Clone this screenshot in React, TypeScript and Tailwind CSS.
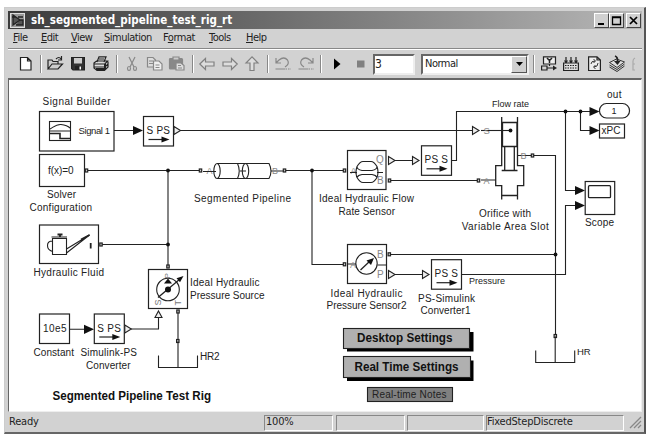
import React from "react";

const ui = "font-['DejaVu_Sans_Condensed','DejaVu_Sans',sans-serif]";

function Label({ x, y, w, s = 10, b, c = "#222", children }: { x: number; y: number; w: number; s?: number; b?: boolean; c?: string; children: string }) {
  return (
    <text x={x} y={y} textLength={w} lengthAdjust={b ? "spacingAndGlyphs" : "spacing"} fontSize={s} fontWeight={b ? 700 : 400} fill={c} stroke="none">
      {children}
    </text>
  );
}
const Box = ({ x, y, w, h }: { x: number; y: number; w: number; h: number }) => <rect x={x} y={y} width={w} height={h} fill="#fff" strokeWidth="1.2" />;
const Port = ({ x, y }: { x: number; y: number }) => <rect x={x - 1.2} y={y - 1.5} width="2.4" height="3" fill="#ccc" strokeWidth="1.2" />;
const Dot = ({ x, y }: { x: number; y: number }) => <circle cx={x} cy={y} r="1.9" fill="#111" stroke="none" />;
const Tri = ({ x, y }: { x: number; y: number }) => <path d={`M${x} ${y - 4}L${x + 6.5} ${y}L${x} ${y + 4}Z`} fill="#eee" />;
const Arrow = ({ x, y }: { x: number; y: number }) => <path d={`M${x - 10} ${y - 4.6}L${x} ${y}L${x - 10} ${y + 4.6}Z`} fill="#111" stroke="none" />;

function Converter({ x, y, t }: { x: number; y: number; t: string }) {
  return (
    <g>
      <Box x={x} y={y} w={30} h={29.5} />
      <Label x={x + 3} y={y + 17.5} w={23.5}>{t}</Label>
      <path d={`M${x + 5} ${y + 23}h16`} strokeWidth="1.2" />
      <path d={`M${x + 18} ${y + 20}l8 3l-8 3z`} fill="#111" stroke="none" />
    </g>
  );
}
const Tank = ({ x, y }: { x: number; y: number }) => <path d={`M${x} ${y - 12}v12h39v-12M${x + 19.5} ${y}v-26`} />;

function Diagram() {
  return (
    <svg className="block h-[331px] w-[632px] font-['Liberation_Sans',Arial,sans-serif]" viewBox="9 80 632 331" fill="none" stroke="#222" strokeWidth="1.1">
      {/* signal lines */}
      <path d="M114 130.500H136M180 130.500H472M88 170.5H200M168 170.5V265M102 244.5H168M286 170.5H343M312 170.5V264.5H343M395 160.5H413M391 180.5H477M452 160.5H456.5V111.5H592M565.5 111.5V190.5H577M580.5 111.5V130.500H592M577 205.5H565.5V274.5H462M391 254.5H555.5M534 155.5H555.5V336M395 274.5H423M70 329.3H86M131 329H158.5V317M178 312V341" />
      <Dot x={168} y={170.5} /><Dot x={168} y={244.5} /><Dot x={312} y={170.5} /><Dot x={565.5} y={111.5} /><Dot x={580.5} y={111.5} /><Dot x={555.5} y={254.5} />

      {/* signal builder */}
      <Label x={42.5} y={105} w={68}>Signal Builder</Label>
      <Box x={39.5} y={111.5} w={74.5} h={39.5} />
      <rect x="49.5" y="121.5" width="21" height="19" />
      <path d="M50 129c5-3 7-5 11-4.500s7 1.500 9 3.500M50 131H70" />
      <path d="M50 133.500h10v5h10" strokeWidth="1.600" />
      <Label x={78.500} y={133.500} w={31.500} s={9.5}>Signal 1</Label>
      <Arrow x={143} y={130.5} />
      <Converter x={143.500} y={116.500} t="S PS" />
      <Tri x={174} y={130.5} />

      {/* solver */}
      <Box x={39.500} y={154.500} w={45} h={32} />
      <Label x={48} y={174} w={25.500}>f(x)=0</Label>
      <Port x={86.500} y={170.500} />
      <Label x={47} y={198} w={29}>Solver</Label>
      <Label x={29.500} y={210.500} w={62.500}>Configuration</Label>

      {/* pipeline */}
      <Port x={200.500} y={170.500} />
      <Label x={206.500} y={173.500} w={6} s={9} c="#888">A</Label>
      <path d="M203 171.500H216M271 171H283" />
      <path d="M217 163.500H237.500q3.500 7.500 0 15H217M245.500 163.500H269q4 7.500 0 15H245.500M240 171h6" />
      <ellipse cx="217" cy="171" rx="3.200" ry="7.500" />
      <ellipse cx="245.500" cy="171" rx="3.200" ry="7.500" />
      <path d="M236 163.500h10M236 178.500h10" />
      <Label x={272} y={173.500} w={6} s={9} c="#888">B</Label>
      <Port x={284.500} y={170.500} />
      <Label x={194} y={202} w={97}>Segmented Pipeline</Label>

      {/* flow sensor */}
      <Box x={347.500} y={150.500} w={38.500} h={39} />
      <Port x={344.500} y={170.500} />
      <Label x={350.500} y={173.500} w={6.500} s={9} c="#888">A</Label>
      <path d="M350 172.500H357M377 172.500H383M357 166.500q3-5 6-5h8q3 0 6 5M357 166.500q0 3 5 4h10q5-1 5-4M357 177.500q3 5 6 5h8q3 0 6-5M357 177.500q1-2.500 5-3h10q4 .5 5 3M357 166.500q-2 5.500 0 11M377 166.500q2 5.500 0 11" />
      <Label x={376} y={163} w={7.500} s={10} c="#888">Q</Label>
      <Label x={377} y={183.500} w={6} s={10} c="#888">B</Label>
      <Tri x={388.500} y={160.500} />
      <Port x={389.500} y={180.500} />
      <Tri x={412.500} y={160.500} />
      <Converter x={421.500} y={145.800} t="PS S" />
      <Label x={319} y={202} w={95}>Ideal Hydraulic Flow</Label>
      <Label x={338.500} y={215} w={56.500}>Rate Sensor</Label>

      {/* orifice */}
      <Label x={492} y={106.500} w={37} s={9}>Flow rate</Label>
      <Tri x={472.500} y={130.5} />
      <path d="M481 130.500H510" />
      <Label x={483.500} y={134} w={6} s={9.500} c="#888">S</Label>
      <Port x={478.500} y={180.500} />
      <path d="M481 180H496M517.500 155.500H531" />
      <Label x={483.500} y={183.500} w={6.500} s={9} c="#888">A</Label>
      <Label x={520.500} y={159} w={6.500} s={9} c="#888">B</Label>
      <Port x={532.500} y={155.500} />
      <path d="M501.700 117V165.700H495.700V185.700H501.700V199.500M517.500 117V165.700H523.700V185.700H517.500V199.500" strokeWidth="1.300" />
      <path d="M502.500 122.500h14.500v24h-14.500zM504.700 146.500V170.500M514.300 146.500V170.500M501.700 170.500H517.500M501.700 195.500H517.500" strokeWidth="1.300" />
      <Dot x={510.500} y={130.5} />
      <Label x={479} y={216.500} w={52}>Orifice with</Label>
      <Label x={461.700} y={229.500} w={87}>Variable Area Slot</Label>

      {/* outputs */}
      <Label x={607} y={97.500} w={14.500}>out</Label>
      <rect x="599.500" y="103.500" width="30" height="14.500" rx="7" fill="#fff" strokeWidth="1.200" />
      <Label x={611.500} y={114} w={4.500} s={9}>1</Label>
      <Arrow x={599.500} y={111.500} />
      <Arrow x={599.500} y={130.5} />
      <Box x={599.500} y={124} w={25} h={14} />
      <Label x={601.500} y={134} w={19}>xPC</Label>
      <Box x={585.200} y={181.500} w={29.500} h={33} />
      <rect x="588.500" y="185.700" width="22" height="12" rx="1" strokeWidth="1.300" />
      <Arrow x={585} y={190.500} />
      <Arrow x={585} y={205.500} />
      <Label x={585} y={226} w={29}>Scope</Label>

      {/* hydraulic fluid */}
      <Box x={39.500} y={225} w={59} h={38.500} />
      <Port x={101} y={244.500} />
      <path d="M52.500 238.500H66.500V254.500H52.500ZM51.500 237H67M52.500 241q-5 0-5 4.500t5 6M66.500 249L89.500 235L66.500 253" />
      <path d="M57.500 234.500h5M60 234v3M81 239.500L89.500 235M90.700 243v5.500" strokeWidth="1.800" />
      <Label x={33.500} y={276} w={70.500}>Hydraulic Fluid</Label>

      {/* pressure source */}
      <Box x={148.500} y={269.500} w={39} h={39} />
      <Port x={168} y={266.500} />
      <circle cx="168" cy="289.500" r="11.300" />
      <path d="M158 297.500L180 279" strokeWidth="1.300" />
      <path d="M183.500 276l-3.500 6.200l-3.500-4z" fill="#111" stroke="none" />
      <path d="M168 278.500l4 5h-8z" fill="#111" stroke="none" />
      <circle cx="168" cy="289.500" r="3" fill="#111" stroke="none" />
      <text transform="translate(169.500 278.500) rotate(-90)" fontSize="8" fill="#777" stroke="none">P</text>
      <text transform="translate(161 305.500) rotate(-90)" fontSize="9" fill="#777" stroke="none">S</text>
      <text transform="translate(181 305.500) rotate(-90)" fontSize="9" fill="#777" stroke="none">T</text>
      <path d="M158.500 311l3.500 6.500h-7z" fill="#eee" />
      <Port x={178} y={311.500} />
      <Label x={190} y={286} w={69.500}>Ideal Hydraulic</Label>
      <Label x={190} y={299} w={74.500}>Pressure Source</Label>
      <Port x={177.800} y={341} />
      <Tank x={158.500} y={367.500} />
      <Label x={200} y={359.500} w={19.500}>HR2</Label>

      {/* constant */}
      <Box x={39.500} y={314} w={30} h={29.500} />
      <Label x={43} y={332} w={23.500}>10e5</Label>
      <Arrow x={94} y={329.300} />
      <Converter x={94.300} y={314} t="S PS" />
      <Tri x={124.800} y={329} />
      <Label x={33.500} y={355.500} w={40.500}>Constant</Label>
      <Label x={80.500} y={355.500} w={56.500}>Simulink-PS</Label>
      <Label x={86} y={368.500} w={44.500}>Converter</Label>
      <Label x={52.500} y={399.500} w={158.500} s={12} b c="#111">Segmented Pipeline Test Rig</Label>

      {/* pressure sensor */}
      <Box x={347.500} y={244.500} w={39} h={39} />
      <Port x={344.500} y={264.300} />
      <path d="M347.500 264H356M377.500 265H386.500" />
      <Label x={350} y={267.500} w={6.500} s={9} c="#888">A</Label>
      <circle cx="366.500" cy="263.500" r="10.700" />
      <path d="M360.500 270L370 261" strokeWidth="1.300" />
      <path d="M374 258l-3 7l-4.500-4.500z" fill="#111" stroke="none" />
      <Label x={377} y={257.500} w={6} s={10} c="#888">B</Label>
      <Label x={377} y={277.500} w={6} s={10} c="#888">P</Label>
      <Port x={389.300} y={254.300} />
      <Tri x={388.500} y={274.500} />
      <Tri x={422.500} y={274.500} />
      <Converter x={431.500} y={259.700} t="PS S" />
      <Label x={469} y={284} w={36} s={9}>Pressure</Label>
      <Label x={330.500} y={296.500} w={72}>Ideal Hydraulic</Label>
      <Label x={326.500} y={309} w={80}>Pressure Sensor2</Label>
      <Label x={418} y={301.500} w={57}>PS-Simulink</Label>
      <Label x={420.500} y={314} w={50}>Converter1</Label>
      <Port x={555.300} y={336} />
      <Tank x={535.700} y={362.500} />
      <Label x={577} y={354.500} w={13.500} s={9.5}>HR</Label>

      {/* annotation buttons */}
      <rect x="347" y="332" width="126.500" height="19.500" fill="#000" stroke="none" />
      <rect x="343.500" y="328.500" width="126" height="20" fill="#b0b0b0" />
      <Label x={357} y={342} w={95.500} s={12} b c="#111">Desktop Settings</Label>
      <rect x="347" y="360.500" width="126.500" height="20.500" fill="#000" stroke="none" />
      <rect x="343.500" y="356.500" width="127" height="21" fill="#b0b0b0" />
      <Label x={354.500} y={370.500} w={104} s={12} b c="#111">Real Time Settings</Label>
      <rect x="367.500" y="387.500" width="85" height="14" fill="#808080" />
      <Label x={372} y={397.500} w={74.500} s={10}>Real-time Notes</Label>
    </svg>
  );
}

function Icon({ ml, w = 16, color = "#222", children }: { ml: string; w?: number; color?: string; children: React.ReactNode }) {
  return (
    <svg className={`h-4 shrink-0 overflow-visible ${ml}`} width={w} height="16" viewBox={`0 0 ${w} 16`} fill="none" stroke={color} strokeWidth="1.2">
      {children}
    </svg>
  );
}
const Sep = ({ ml }: { ml: string }) => <i className={`h-[18px] w-[2px] shrink-0 border-l border-l-[#888] bg-white ${ml}`} />;

function Toolbar() {
  return (
    <div className="flex h-[29px] shrink-0 items-center overflow-hidden border-t border-t-white">
      <Icon ml="ml-[12px]" w={12}><path d="M.5 1.500H7.500L11 5V14H.5ZM7.500 1.500V5H11" fill="#fff" /></Icon>
      <Sep ml="ml-[8px]" />
      <Icon ml="ml-[5px]"><path d="M1 13V4H5L6 5.500H11V8M1 13L5 8H15.500L11 13ZM9 3q3-3 5 0M14.500 0V4H11" fill="#ccc" /></Icon>
      <Icon ml="ml-[8px]" w={14}><path d="M.6 1.500H13.400V14H2L.6 12.500Z" fill="#333" /><path d="M3 2H11V7.500H3Z" fill="#ccc" stroke="none" /><path d="M4 10H10V14H4Z" fill="#222" stroke="none" /><path d="M8.500 10.500h1.500v3h-1.500z" fill="#fff" stroke="none" /></Icon>
      <Icon ml="ml-[8px]"><path d="M4 6L6 .8H13L11 6M1 7L3.500 5H14.500L12 8H1ZM1 8V12L4 14.500H11.500L15 11V5.500M1 11H12L15 8M6 3H11" fill="#ddd" /><path d="M3 13H12M12 8V13" strokeWidth="2" /></Icon>
      <Sep ml="ml-[7px]" />
      <Icon ml="ml-[9px]" w={10} color="#888"><path d="M2 1L7 11M8 1L3 11" /><ellipse cx="2" cy="12.500" rx="1.500" ry="2" /><ellipse cx="8" cy="12.500" rx="1.500" ry="2" /></Icon>
      <Icon ml="ml-[10px]" color="#888"><path d="M.5 1.500H6L8.500 4V11H.5Z" fill="#ddd" /><path d="M6.500 5H12L15 8V14H6.500ZM2 5h4M2 7.500h4M8.500 9h4M8.500 11.500h4" fill="#eee" /></Icon>
      <Icon ml="ml-[6px]" color="#888"><rect x=".5" y="2.500" width="13" height="10.500" rx="1" fill="#888" /><path d="M4 1h6v3H4z" fill="#ccc" /><path d="M7 7H12L15 9.500V14H7ZM9 9.500h3M9 12h4" fill="#ddd" /></Icon>
      <Sep ml="ml-[7px]" />
      <Icon ml="ml-[5px]" color="#808080"><path d="M.8 8L6.500 2.500V6H15V10H6.500V13.500Z" fill="#ddd" /></Icon>
      <Icon ml="ml-[7px]" color="#808080"><path d="M15.200 8L9.500 2.500V6H1V10H9.500V13.500Z" fill="#ddd" /></Icon>
      <Icon ml="ml-[7px]" w={14} color="#808080"><path d="M7 .8L1 7H5V14.500H9V7H13Z" fill="#ddd" /></Icon>
      <Sep ml="ml-[8px]" />
      <Icon ml="ml-[6px]" color="#888"><path d="M1 2V7H6M1 7L4 4Q9 0 12.500 4Q15 8 10 11M.5 13H10" /><path d="M10.500 13H16" strokeDasharray="1.500 1" /></Icon>
      <Icon ml="ml-[7px]" color="#888"><path d="M15 2V7H10M15 7L12 4Q7 0 3.500 4Q1 8 6 11M.5 13H10" /><path d="M10.500 13H16" strokeDasharray="1.500 1" /></Icon>
      <Sep ml="ml-[6px]" />
      <Icon ml="ml-[12px]" w={7}><path d="M0 2.500L6.500 8L0 13.500Z" fill="#000" stroke="none" /></Icon>
      <Icon ml="ml-[16px]" w={8}><path d="M0 4.500H7.500V11.500H0Z" fill="#808080" stroke="none" /></Icon>
      <div className="ml-[8px] flex h-[21px] w-[42px] shrink-0 items-center border-2 border-b-[#eee] border-l-[#666] border-r-[#eee] border-t-[#666] bg-white text-[12px]">3</div>
      <div className="ml-[6px] flex h-[21px] w-[108px] shrink-0 items-center justify-between border-2 border-b-[#eee] border-l-[#666] border-r-[#eee] border-t-[#666] bg-white pl-[2px] text-[11px]">
        <span className="tracking-[-0.5px]">Normal</span>
        <span className="flex h-[17px] w-[16px] items-center justify-center border border-b-[#555] border-l-white border-r-[#555] border-t-white bg-[#d0d0d0]">
          <svg width="7" height="4" viewBox="0 0 7 4"><path d="M0 0H7L3.500 4Z" /></svg>
        </span>
      </div>
      <Sep ml="ml-[4px]" />
      <Icon ml="ml-[6px]"><path d="M2.500.8H14.500V8H2.500Z" fill="#eee" /><path d="M6 2L8.500 4.500V7M11 2L8.500 4.500" strokeWidth="1.500" /><path d="M.6 10H6V14H.6ZM6 12H13M8.500 8V10" /><path d="M12 9.500L16 12L12 14.500Z" fill="#222" stroke="none" /></Icon>
      <Icon ml="ml-[6px]"><path d="M.6 7H15.400V14.500H.6ZM3 1V6M8 1V6M13 1V6M1.500 4.500L3 6.500L4.500 4.500M6.500 4.500L8 6.500L9.500 4.500M11.500 4.500L13 6.500L14.500 4.500" fill="#ddd" /><path d="M2 9.500H14M2 12H14" strokeDasharray="1.500 1" /></Icon>
      <Icon ml="ml-[9px]" w={13}><path d="M.6 .8H9L12.400 4V14.500H.6ZM9 .8V4H12" fill="#eee" /><path d="M3 8Q3 5 7 5M5.500 3L7.500 5L5.500 7M10 7Q10 11 6 11M7.500 9L5.500 11L7.500 13" strokeWidth=".9" /></Icon>
      <Icon ml="ml-[8px]"><path d="M.5 11L8 15.500L15.500 10M.5 9L8 13.500L15.500 8" strokeWidth=".9" /><path d="M.5 6.500L7.500 3L15.500 6L8 11.500Z" fill="#ddd" strokeWidth=".9" /><path d="M6 0Q9 1 8.500 6" strokeWidth="1.800" /><path d="M5 5H11.500L8.500 9Z" fill="#222" stroke="none" /></Icon>
      <Icon ml="ml-[7px]" w={3} color="#aaa"><path d="M3 2Q1 3 1 5V14H3M1 8H3" /></Icon>
    </div>
  );
}

const menus = [
  ["File", "w-[28px]"], ["Edit", "w-[30px]"], ["View", "w-[33px]"], ["Simulation", "w-[59px]"], ["Format", "w-[46px]"], ["Tools", "w-[37px]"], ["Help", "w-[30px]"],
];

function Caption({ children }: { children: React.ReactNode }) {
  return (
    <span className="flex h-[15px] w-[15px] items-center justify-center border border-b-[#444] border-l-white border-r-[#444] border-t-white bg-[#d0d0d0]">
      <svg width="11" height="11" viewBox="0 0 11 11" fill="none" stroke="#000">{children}</svg>
    </span>
  );
}
const cell = "flex h-[16px] items-center border border-b-white border-l-[#888] border-r-white border-t-[#888]";

export default function App() {
  return (
    <div className={`h-[445px] w-[655px] overflow-hidden bg-white pl-[4px] pt-[7px] text-[#222] ${ui}`}>
      <div className="flex h-[427px] w-[642px] flex-col border-b-2 border-l border-r-2 border-t border-b-[#666] border-l-[#ccc] border-r-[#555] border-t-[#ccc] bg-[#d2d2d2] pl-[3px] pr-[2px] pt-[3px]">
        <div className="flex h-[18px] shrink-0 items-center bg-linear-to-r from-[#3c3c3c] to-[#b8b8b8] pl-[2px] pr-[1px]">
          <svg width="15" height="15" viewBox="0 0 15 15" fill="none" stroke="#222">
            <rect x=".5" y=".5" width="14" height="14" fill="#999" stroke="#ddd" />
            <path d="M3 2L10 7L3 12ZM2 4H6M10 7H13V12H6M8 4h5" fill="#555" strokeWidth="1.300" />
          </svg>
          <span className="ml-[6px] flex-1 whitespace-nowrap text-[11.500px] font-bold leading-[18px] tracking-[0.02px] text-white">sh_segmented_pipeline_test_rig_rt</span>
          <Caption><path d="M2 9H8" strokeWidth="2" /></Caption>
          <Caption><path d="M1.500 2H9.500V9.500H1.500ZM1.500 2.500H9.500" strokeWidth="1.300" /></Caption>
          <span className="w-[2px]" />
          <Caption><path d="M2 2L9 9M9 2L2 9" strokeWidth="1.700" /></Caption>
        </div>
        <div className="flex h-[20px] shrink-0 items-center border-b border-b-[#888] pl-[5px] text-[11px] tracking-[-0.5px]">
          {menus.map(([m, w]) => {
            const i = m === "Format" ? 1 : 0;
            return (
              <span key={m} className={`shrink-0 ${w}`}>
                {m.slice(0, i)}<u className="underline-offset-[1px]">{m[i]}</u>{m.slice(i + 1)}
              </span>
            );
          })}
        </div>
        <Toolbar />
        <div className="shrink-0 self-start border-b border-l border-r border-t-2 border-b-[#eee] border-l-[#666] border-r-[#eee] border-t-[#666] bg-white"><Diagram /></div>
        <div className="mt-[1px] flex h-[19px] shrink-0 items-center text-[11px] tracking-[-0.2px]">
          <span className="w-[256px] pl-[1px]">Ready</span>
          <span className={`${cell} w-[69px] pl-[1px]`}>100%</span>
          <span className={`${cell} ml-[3px] w-[69px]`} />
          <span className={`${cell} ml-[2px] w-[77px]`} />
          <span className={`${cell} ml-[2px] w-[138px]`}>FixedStepDiscrete</span>
          <svg className="ml-auto" width="13" height="13" viewBox="0 0 13 13" stroke="#888" strokeWidth="1.300"><path d="M1 12L12 1M5 12L12 5M9 12L12 9" /></svg>
        </div>
      </div>
    </div>
  );
}
